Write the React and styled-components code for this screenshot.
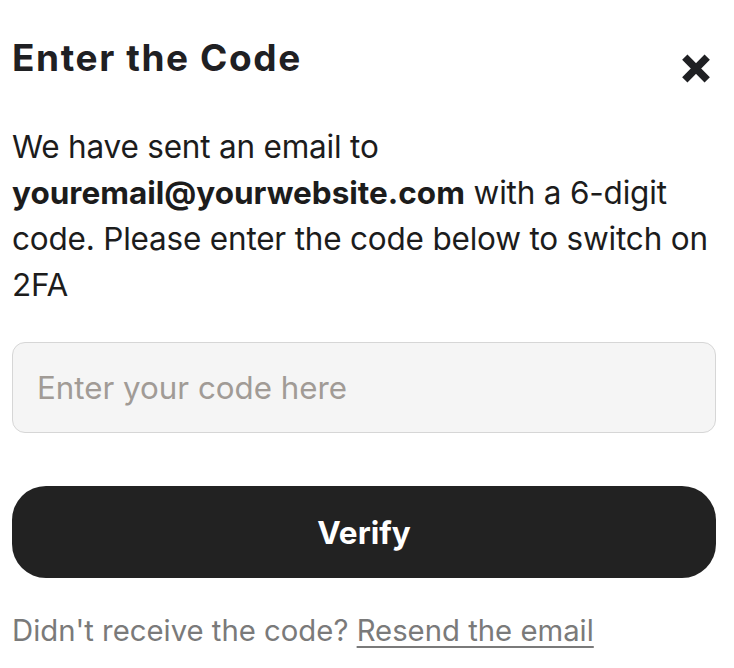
import React from "react";
import styled, { createGlobalStyle } from "styled-components";

const Global = createGlobalStyle`
  html, body { margin: 0; padding: 0; background: #fff; }
  body { font-family: Inter, "Noto Sans", sans-serif; color: #1c1c1c; }
  * { box-sizing: border-box; }
`;

const Dialog = styled.div`
  width: 734px;
  padding: 28px 18px 0 12px;
  display: flex;
  flex-direction: column;
`;

const Header = styled.div`
  display: flex;
  justify-content: space-between;
  align-items: flex-start;
`;

const Title = styled.h1`
  margin: 0;
  font-size: 37px;
  font-weight: 700;
  line-height: 60px;
  letter-spacing: 1.6px;
  color: #1f2023;
`;

const CloseButton = styled.button`
  border: 0;
  background: none;
  padding: 0;
  margin: 26px 6px 0 0;
  width: 28px;
  height: 29px;
  display: flex;
  cursor: pointer;
`;

const Text = styled.p`
  margin: 36px 0 0;
  font-size: 31.5px;
  line-height: 46px;
  letter-spacing: -0.2px;
  color: #1c1c1c;
`;

const Strong = styled.strong`
  font-weight: 700;
  letter-spacing: 0;
`;

const Input = styled.input`
  margin-top: 34px;
  width: 704px;
  height: 91px;
  border: 1px solid #d6d6d6;
  border-radius: 13px;
  background: #f5f5f5;
  padding: 0 24px;
  font-family: inherit;
  font-size: 31.3px;
  color: #1c1c1c;
  outline: none;
  &::placeholder { color: #a19b96; }
`;

const Button = styled.button`
  margin-top: 53px;
  width: 704px;
  height: 92px;
  border: 0;
  border-radius: 34px;
  background: #222222;
  color: #fff;
  font-family: inherit;
  font-size: 31.5px;
  font-weight: 700;
  cursor: pointer;
`;

const Footer = styled.p`
  margin: 30px 0 0;
  font-size: 29.3px;
  line-height: 46px;
  color: #7a7a7a;
`;

const Link = styled.a`
  color: #7a7a7a;
  text-decoration: underline;
  text-underline-offset: 5px;
  text-decoration-thickness: 2px;
`;

export default function App() {
  return (
    <>
      <Global />
      <Dialog>
        <Header>
          <Title>Enter the Code</Title>
          <CloseButton aria-label="Close">
            <svg width="28" height="29" viewBox="0 0 28 29">
              <path d="M2.8 3.2 L25.2 25.8 M25.2 3.2 L2.8 25.8" stroke="#1f2023" strokeWidth="7.5" strokeLinecap="butt" />
            </svg>
          </CloseButton>
        </Header>
        <Text>
          We have sent an email to <Strong>youremail@yourwebsite.com</Strong> with a 6-digit code. Please enter the code below to switch on 2FA
        </Text>
        <Input placeholder="Enter your code here" />
        <Button>Verify</Button>
        <Footer>
          Didn't receive the code? <Link href="#">Resend the email</Link>
        </Footer>
      </Dialog>
    </>
  );
}
